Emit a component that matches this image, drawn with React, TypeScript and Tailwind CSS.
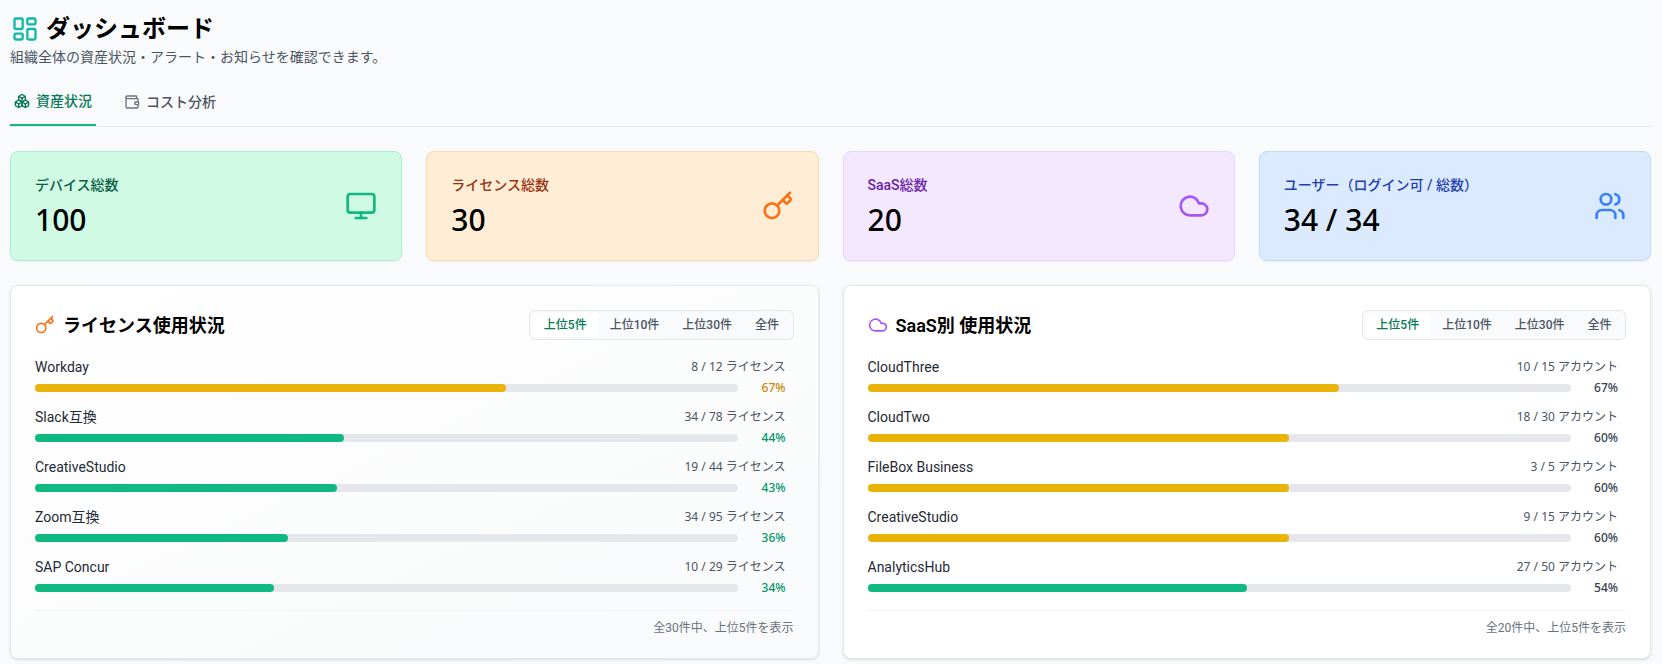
import { Cloud, Key, LayoutDashboard, Monitor, Users, Wallet, Boxes } from "lucide-react";
import type { ReactNode } from "react";

type Row = { name: string; used: string; pct: number };

const font = "font-['Roboto','Noto_Sans_CJK_JP',sans-serif]";
const notoFont = "font-['Noto_Sans','Noto_Sans_CJK_JP',sans-serif]";

const licenseRows: Row[] = [
  { name: "Workday", used: "8 / 12 ライセンス", pct: 67 },
  { name: "Slack互換", used: "34 / 78 ライセンス", pct: 44 },
  { name: "CreativeStudio", used: "19 / 44 ライセンス", pct: 43 },
  { name: "Zoom互換", used: "34 / 95 ライセンス", pct: 36 },
  { name: "SAP Concur", used: "10 / 29 ライセンス", pct: 34 },
];

const saasRows: Row[] = [
  { name: "CloudThree", used: "10 / 15 アカウント", pct: 67 },
  { name: "CloudTwo", used: "18 / 30 アカウント", pct: 60 },
  { name: "FileBox Business", used: "3 / 5 アカウント", pct: 60 },
  { name: "CreativeStudio", used: "9 / 15 アカウント", pct: 60 },
  { name: "AnalyticsHub", used: "27 / 50 アカウント", pct: 54 },
];

function StatCard(props: {
  label: string;
  value: string;
  icon: ReactNode;
  box: string;
  labelColor: string;
}) {
  return (
    <div className={`flex h-[110px] items-center justify-between rounded-lg border px-[24px] shadow-xs ${props.box}`}>
      <div>
        <div className={`text-[14px] leading-[20px] font-medium ${props.labelColor}`}>{props.label}</div>
        <div className={`mt-[7px] text-[30px] leading-[36px] font-medium text-black ${notoFont}`}>{props.value}</div>
      </div>
      {props.icon}
    </div>
  );
}

function UsageRow({ row, pctColor }: { row: Row; pctColor: (pct: number) => string }) {
  const bar = row.pct >= 60 ? "bg-[#eab308]" : "bg-[#10b981]";
  return (
    <div className="h-[50px]">
      <div className="flex h-[22px] items-center justify-between pr-[8px]">
        <span className="text-[14px] font-normal text-[#1f2937]">{row.name}</span>
        <span className={`text-[12px] text-[#4b5563] ${notoFont}`}>{row.used}</span>
      </div>
      <div className="mt-[2px] flex items-center">
        <div className="h-[8px] w-[703px] rounded-full bg-[#e5e7eb]">
          <div className={`h-full rounded-full ${bar}`} style={{ width: `${row.pct}%` }} />
        </div>
        <span className={`ml-auto pr-[8px] text-[12px] leading-[16px] font-medium ${notoFont} ${pctColor(row.pct)}`}>{row.pct}%</span>
      </div>
    </div>
  );
}

function Panel(props: {
  title: string;
  icon: ReactNode;
  rows: Row[];
  footer: string;
  box: string;
  pctColor: (pct: number) => string;
}) {
  return (
    <section className={`h-[374px] rounded-lg border border-[#e5e7eb] px-[24px] pt-[24px] shadow-sm ${props.box}`}>
      <div className="flex h-[30px] items-center justify-between">
        <div className="flex items-center gap-[8px]">
          {props.icon}
          <h2 className="text-[18px] font-semibold text-black">{props.title}</h2>
        </div>
        <div className="flex h-[30px] items-center rounded-md border border-[#e5e7eb] bg-[#f9fafb] p-[2px] text-[12px]">
          <span className="rounded bg-white px-[11.5px] py-[3px] font-medium text-[#047857]">上位5件</span>
          <span className="px-[11.5px] py-[3px] font-medium text-[#4b5563]">上位10件</span>
          <span className="px-[11.5px] py-[3px] font-medium text-[#4b5563]">上位30件</span>
          <span className="px-[11.5px] py-[3px] font-medium text-[#4b5563]">全件</span>
        </div>
      </div>
      <div className="mt-[16px]">
        {props.rows.map((row) => (
          <UsageRow key={row.name} row={row} pctColor={props.pctColor} />
        ))}
      </div>
      <div className="mt-[4px] border-t border-[#f3f4f6] pt-[7px] text-right text-[12px] leading-[20px] text-[#6b7280]">
        {props.footer}
      </div>
    </section>
  );
}

const licensePct = (pct: number) => (pct >= 60 ? "text-[#ca8a04]" : "text-[#059669]");
const saasPct = () => "text-[#374151]";

export default function App() {
  return (
    <div className={`h-[664px] overflow-hidden bg-[#f9fafb] pt-[15px] pr-[11px] pl-[10px] ${font}`}>
      <div className="flex h-[28px] items-center gap-[7px]">
        <LayoutDashboard className="ml-[1px] h-[28px] w-[28px] text-[#14b8a6]" strokeWidth={2} />
        <h1 className="text-[24px] leading-[28px] font-bold text-black">ダッシュボード</h1>
      </div>
      <p className="mt-[4px] text-[14px] leading-[20px] text-[#4b5563]">
        組織全体の資産状況・アラート・お知らせを確認できます。
      </p>
      <div className="mt-[15px] flex h-[45px] gap-[12px] border-b border-[#e5e7eb] text-[14px] font-medium">
        <div className="flex items-center gap-[6px] border-b-2 border-[#10b981] px-[4px] pb-[4px] text-[#047857]">
          <Boxes className="h-[16px] w-[16px]" />
          資産状況
        </div>
        <div className="flex items-center gap-[6px] px-[16px] pb-[4px] text-[#4b5563]">
          <Wallet className="h-[16px] w-[16px] text-[#6b7280]" />
          コスト分析
        </div>
      </div>

      <div className="mt-[24px] grid grid-cols-4 gap-[24px]">
        <StatCard
          label="デバイス総数"
          value="100"
          box="border-[#a7f3d0] bg-[#d1fae5]"
          labelColor="text-[#065f46]"
          icon={<Monitor className="h-[32px] w-[32px] text-[#10b981]" />}
        />
        <StatCard
          label="ライセンス総数"
          value="30"
          box="border-[#fed7aa] bg-[#ffedd5]"
          labelColor="text-[#9a3412]"
          icon={<Key className="h-[32px] w-[32px] text-[#f97316]" />}
        />
        <StatCard
          label="SaaS総数"
          value="20"
          box="border-[#e9d5ff] bg-[#f3e8ff]"
          labelColor="text-[#6b21a8]"
          icon={<Cloud className="h-[32px] w-[32px] text-[#a855f7]" />}
        />
        <StatCard
          label="ユーザー（ログイン可 / 総数）"
          value="34 / 34"
          box="border-[#bfdbfe] bg-[#dbeafe]"
          labelColor="text-[#1e40af]"
          icon={<Users className="h-[32px] w-[32px] text-[#3b82f6]" />}
        />
      </div>

      <div className="mt-[24px] grid grid-cols-2 gap-[24px]">
        <Panel
          title="ライセンス使用状況"
          box="bg-gradient-to-br from-white to-[#f9fafb]"
          icon={<Key className="h-[20px] w-[20px] text-[#f97316]" />}
          rows={licenseRows}
          footer="全30件中、上位5件を表示"
          pctColor={licensePct}
        />
        <Panel
          title="SaaS別 使用状況"
          box="bg-white"
          icon={<Cloud className="h-[20px] w-[20px] text-[#a855f7]" />}
          rows={saasRows}
          footer="全20件中、上位5件を表示"
          pctColor={saasPct}
        />
      </div>
    </div>
  );
}
